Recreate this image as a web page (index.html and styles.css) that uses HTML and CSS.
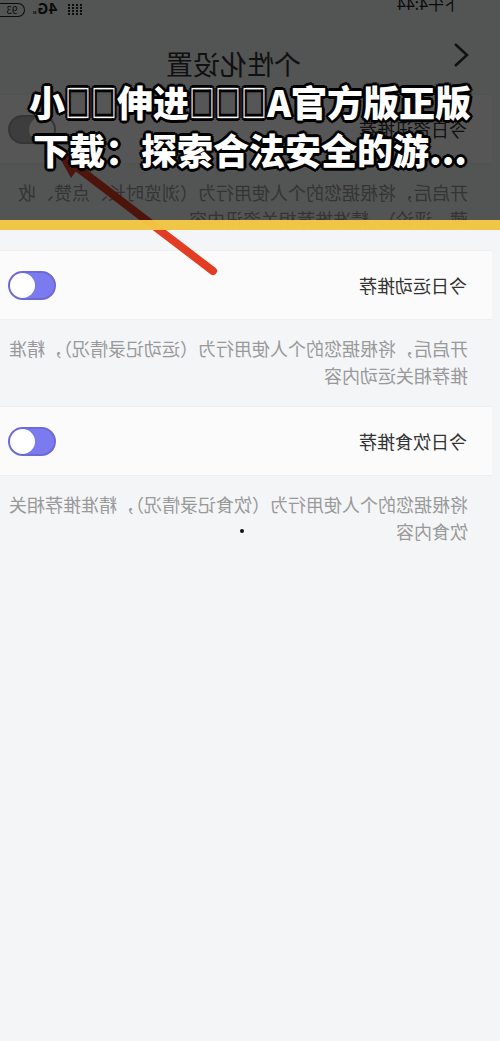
FILE: index.html
```html
<!DOCTYPE html>
<html lang="zh-CN">
<head>
  <meta charset="UTF-8">
  <meta name="viewport" content="width=device-width, initial-scale=1.0">
  <title>个性化设置</title>
  <link rel="stylesheet" href="styles.css">
</head>
<body>
  <div class="page">
    <div class="shot">
      <div class="status">
        <span class="time">下午4:44</span>
        <div class="status-icons">
          <svg class="signal" width="18" height="13" viewBox="0 0 18 13">
            <g stroke="#222" stroke-width="2" stroke-dasharray="2 1">
              <line x1="2" y1="1" x2="2" y2="13"/>
              <line x1="6" y1="1" x2="6" y2="13"/>
              <line x1="10" y1="1" x2="10" y2="13"/>
              <line x1="14" y1="1" x2="14" y2="13"/>
            </g>
          </svg>
          <span class="net">4G<small>ıı</small></span>
          <span class="battery">93</span>
        </div>
      </div>

      <div class="header">
        <svg class="back" width="18" height="26" viewBox="0 0 18 26">
          <polyline points="15,2 3,13 15,24" fill="none" stroke="#333" stroke-width="2.5"/>
        </svg>
        <h2>个性化设置</h2>
      </div>

      <div class="row">
        <span class="row-title">今日资讯推荐</span>
        <span class="switch off"></span>
      </div>
      <p class="desc">开启后，将根据您的个人使用行为（浏览时长、点赞、收藏、评论），精准推荐相关资讯内容</p>

      <div class="row">
        <span class="row-title">今日运动推荐</span>
        <span class="switch"></span>
      </div>
      <p class="desc">开启后，将根据您的个人使用行为（运动记录情况），精准推荐相关运动内容</p>

      <div class="row">
        <span class="row-title">今日饮食推荐</span>
        <span class="switch"></span>
      </div>
      <p class="desc">将根据您的个人使用行为（饮食记录情况），精准推荐相关饮食内容</p>
    </div>

    <svg class="arrow" width="500" height="300" viewBox="0 0 500 300">
      <line x1="213" y1="271" x2="78" y2="168" stroke="#e23d22" stroke-width="8" stroke-linecap="round"/>
      <polygon points="56,151 86,158 71,178" fill="#e23d22"/>
    </svg>

    <span class="speck"></span>

    <div class="banner">
      <h1 class="headline">小<span class="tofu">□</span><span class="tofu">□</span>伸进<span class="tofu">□</span><span class="tofu">□</span><span class="tofu">□</span>A官方版正版<br>下载：探索合法安全的游...</h1>
    </div>
  </div>
</body>
</html>
```

FILE: styles.css
```css
body {
  margin: 0;
  background-color: #f4f5f7;
  font-family: "Noto Sans CJK SC", "Noto Sans", sans-serif;
  overflow: hidden;
}
.page {
  position: relative;
  width: 500px;
  height: 1041px;
  overflow: hidden;
}

/* the phone screenshot is flipped left to right */
.shot {
  transform: scaleX(-1);
  width: 500px;
}
.status {
  display: flex;
  justify-content: space-between;
  height: 18px;
  padding-left: 40px;
}
.status .time {
  margin-top: -7px;
  font-size: 16px;
  line-height: 20px;
  color: #222;
}
.status-icons {
  display: flex;
  align-items: center;
  gap: 8px;
  margin-top: 3px;
  height: 13px;
}
.net {
  font-size: 15px;
  font-weight: 700;
  line-height: 13px;
  color: #222;
}
.net small {
  font-size: 6px;
  margin-left: 1px;
}
.battery {
  width: 24px;
  height: 12px;
  border: 1px solid #222;
  border-right: none;
  border-radius: 7px 0 0 7px;
  font-size: 10px;
  line-height: 12px;
  text-align: center;
  color: #222;
}

.header {
  display: flex;
  align-items: flex-start;
  height: 49px;
  padding: 27px 0 0 30px;
}
.header .back {
  margin-top: -3px;
}
.header h2 {
  margin: 1px 0 0 151px;
  font-size: 27px;
  line-height: 36px;
  font-weight: 400;
  color: #333;
}

.row {
  display: flex;
  align-items: center;
  justify-content: space-between;
  height: 70px;
  margin-left: 8px;
  padding: 0 8px 0 25px;
  background-color: #fbfbfb;
  border-top: 1px solid #eeeff1;
  border-bottom: 1px solid #eeeff1;
  box-sizing: border-box;
}
.row-title {
  font-size: 18px;
  color: #333;
}
.switch {
  position: relative;
  width: 48px;
  height: 29px;
  box-sizing: border-box;
  border: 2px solid #6d6ad6;
  border-radius: 15px;
  background-color: #7b7aef;
}
.switch::after {
  content: "";
  position: absolute;
  top: 0;
  right: 0;
  width: 25px;
  height: 25px;
  border-radius: 50%;
  background-color: #fff;
}
.switch.off {
  border-color: #9c9c9c;
  background-color: #b4b4b4;
}
.switch.off::after {
  right: auto;
  left: 0;
}
.desc {
  margin: 0;
  padding: 15px 8px 17px 32px;
  font-size: 18px;
  line-height: 27px;
  color: #999;
}

.arrow {
  position: absolute;
  top: 0;
  left: 0;
}
.speck {
  position: absolute;
  top: 529px;
  left: 240px;
  width: 4px;
  height: 4px;
  border-radius: 50%;
  background-color: #111;
}

.banner {
  position: absolute;
  top: 0;
  left: 0;
  width: 500px;
  height: 220px;
  background-color: rgba(0, 0, 0, 0.66);
  border-bottom: 10px solid rgba(254, 208, 72, 0.92);
}
.headline {
  margin: 0;
  padding-top: 77px;
  text-align: center;
  font-size: 36px;
  line-height: 48px;
  font-weight: 900;
  color: #fff;
  text-shadow:
    3px 0 0 #000, -3px 0 0 #000, 0 3px 0 #000, 0 -3px 0 #000,
    2px 2px 0 #000, -2px -2px 0 #000, 2px -2px 0 #000, -2px 2px 0 #000;
}
.headline .tofu {
  display: inline-block;
  margin-right: -10px;
  font-weight: 400;
  transform: scaleX(0.72);
  transform-origin: left center;
}
```
